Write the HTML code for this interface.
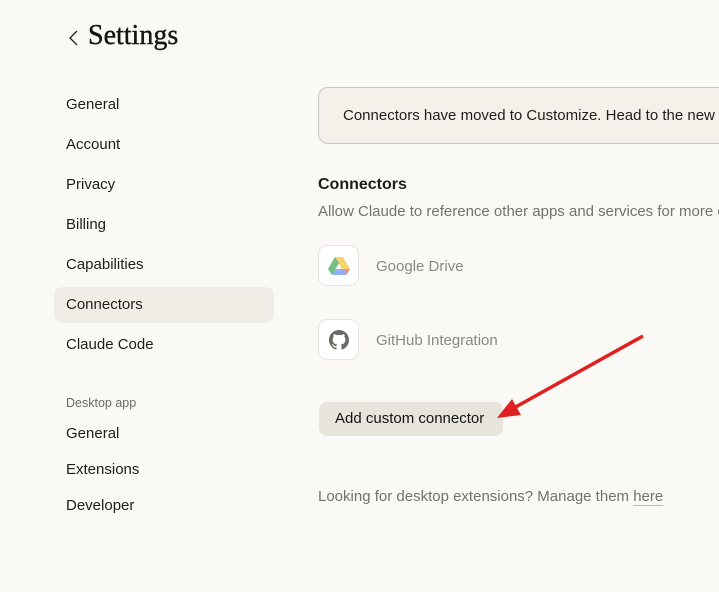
<!DOCTYPE html>
<html><head><meta charset="utf-8"><style>
html,body{margin:0;width:719px;height:592px;overflow:hidden}
body{background:#faf9f5;font-family:"Liberation Sans",sans-serif;color:#1f1e1d;position:relative}
.a{position:absolute;white-space:nowrap}
.nav{font-size:15px;left:66px}
</style></head><body>
<svg class="a" style="left:66px;top:29px" width="14" height="18"><path d="M11 2 L4 9 L11 16" fill="none" stroke="#222" stroke-width="1.3"/></svg>
<div class="a" style="left:88px;top:20px;font-family:'Liberation Serif',serif;font-size:28px;color:#141413;-webkit-text-stroke:0.4px #141413">Settings</div>
<div class="a nav" style="top:96px">General</div>
<div class="a nav" style="top:136px">Account</div>
<div class="a nav" style="top:176px">Privacy</div>
<div class="a nav" style="top:216px">Billing</div>
<div class="a nav" style="top:256px">Capabilities</div>
<div class="a" style="left:54px;top:287px;width:220px;height:36px;background:#efede6;border-radius:8px"></div>
<div class="a nav" style="top:296px">Connectors</div>
<div class="a nav" style="top:336px">Claude Code</div>
<div class="a" style="left:66px;top:396px;font-size:12.5px;color:#6b6a66">Desktop app</div>
<div class="a nav" style="top:425px">General</div>
<div class="a nav" style="top:461px">Extensions</div>
<div class="a nav" style="top:497px">Developer</div>

<div class="a" style="left:318px;top:87px;width:401px;height:57px;overflow:hidden">
<div class="a" style="left:0;top:0;width:420px;height:57px;background:#f3f1ea;border:1px solid #c9c7bf;border-radius:10px;box-sizing:border-box"></div>
<div class="a" style="left:25px;top:20px;font-size:15px">Connectors have moved to Customize. Head to the new Customize page</div>
</div>
<div class="a" style="left:318px;top:176px;font-size:16px;font-weight:bold">Connectors</div>
<div class="a" style="left:318px;top:203px;width:401px;overflow:hidden;font-size:15px;color:#73726c">Allow Claude to reference other apps and services for more context.</div>

<div class="a" style="left:318px;top:245px;width:41px;height:41px;border:1px solid #e6e4dd;border-radius:9px;background:#fff;box-sizing:border-box"></div>
<svg class="a" style="left:328px;top:256px" width="22" height="20" viewBox="0 0 22 20"><path d="M7 1h8l7 12h-8z" fill="#f7d36b"/><path d="M7 1L0 13l4 6 7-12z" fill="#76bd83"/><path d="M4 19h14l4-6H7.5z" fill="#8fb0f0"/><path d="M18 19l4-6h-5z" fill="#ee8d7f"/></svg>
<div class="a" style="left:376px;top:258px;font-size:15px;color:#8a8984">Google Drive</div>

<div class="a" style="left:318px;top:319px;width:41px;height:41px;border:1px solid #e6e4dd;border-radius:9px;background:#fff;box-sizing:border-box"></div>
<svg class="a" style="left:329px;top:330px" width="20" height="20" viewBox="0 0 16 16"><path fill="#6b6a66" d="M8 0C3.58 0 0 3.58 0 8c0 3.54 2.290 6.530 5.470 7.590.4.07.55-.17.55-.38v-1.330c-2.230.49-2.7-1.070-2.7-1.070-.36-.92-.89-1.170-.89-1.170-.73-.5.06-.49.06-.49.8.06 1.230.83 1.230.83.72 1.230 1.880.87 2.340.67.07-.52.28-.87.51-1.070-1.780-.2-3.640-.89-3.640-3.950 0-.87.31-1.590.82-2.150-.08-.2-.36-1.020.08-2.120 0 0 .67-.21 2.200.82a7.600 7.600 0 0 1 4 0c1.530-1.040 2.200-.82 2.200-.82.44 1.100.16 1.920.08 2.120.51.56.82 1.270.82 2.150 0 3.070-1.870 3.750-3.650 3.950.29.25.54.73.54 1.480v2.200c0 .21.15.46.55.38A8 8 0 0 0 16 8c0-4.420-3.580-8-8-8z"/></svg>
<div class="a" style="left:376px;top:332px;font-size:15px;color:#8a8984">GitHub Integration</div>

<div class="a" style="left:319px;top:402px;width:184px;height:34px;background:#e6e4db;border-radius:8px"></div>
<div class="a" style="left:335px;top:410px;font-size:15px;color:#141413">Add custom connector</div>

<svg class="a" style="left:0;top:0" width="719" height="592"><line x1="643" y1="336" x2="512" y2="409" stroke="#e02020" stroke-width="3.5"/><path d="M497 418 L521 415 L512 399 Z" fill="#e02020"/></svg>

<div class="a" style="left:318px;top:488px;font-size:15px;color:#73726c">Looking for desktop extensions? Manage them <span style="text-decoration:underline;text-decoration-color:#bbb;text-underline-offset:4px">here</span></div>
</body></html>
